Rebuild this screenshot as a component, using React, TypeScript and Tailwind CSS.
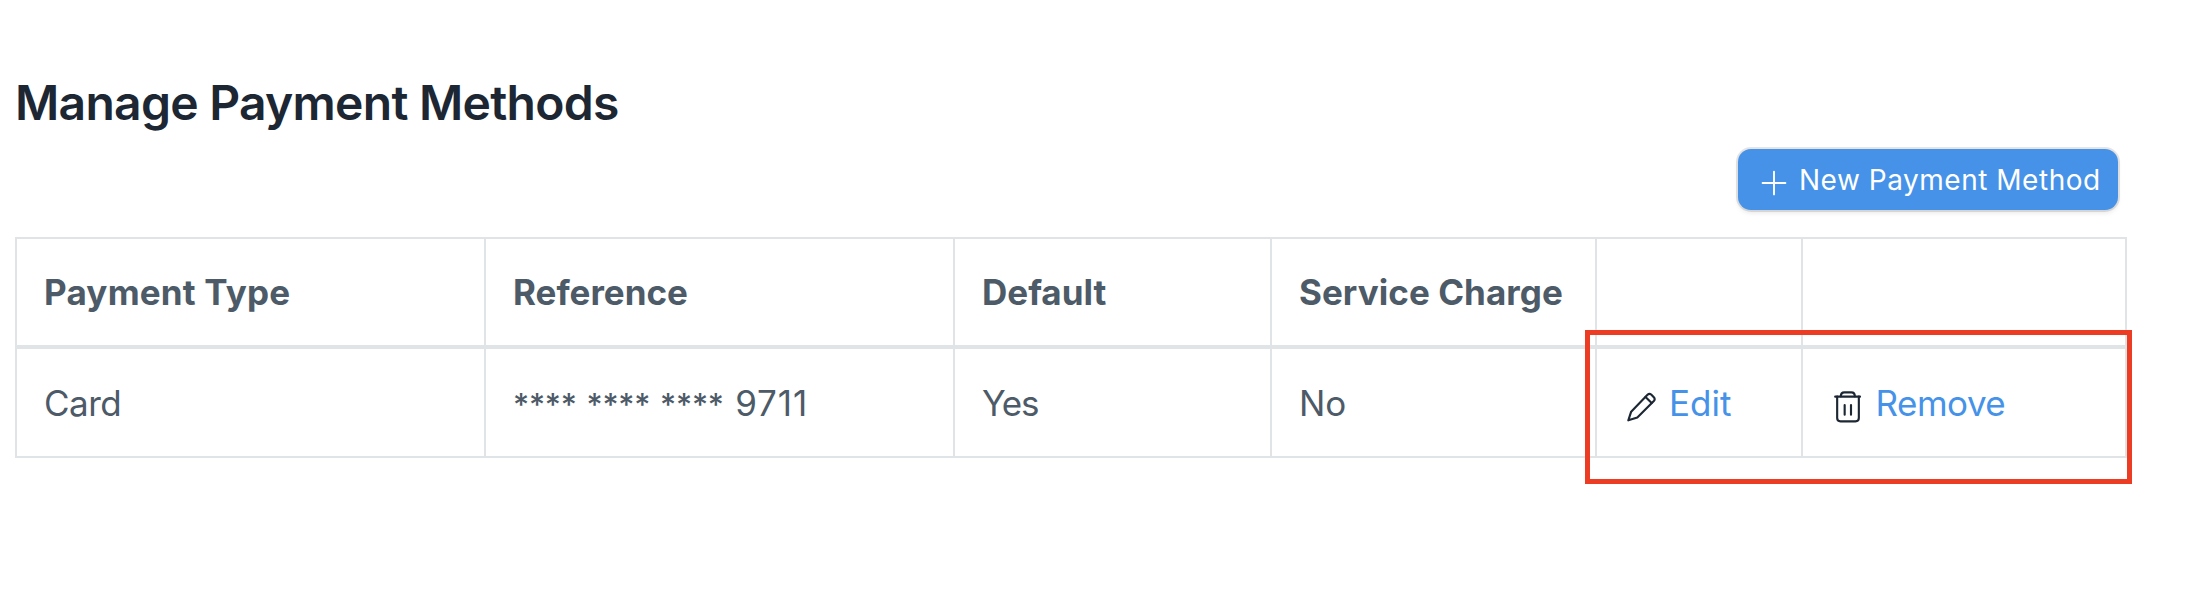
import React from "react";

function PlusIcon() {
  return (
    <svg className="mt-[7px] h-[26px] w-[26px] shrink-0" viewBox="0 0 26 26" fill="none" stroke="currentColor" strokeWidth="1.9" strokeLinecap="round">
      <path d="M13 1.6v22.8M1.6 13h22.8" />
    </svg>
  );
}

function PencilIcon() {
  return (
    <svg className="mt-[7px] h-[30px] w-[30px] shrink-0" viewBox="36 36 90 90" fill="none" stroke="currentColor" strokeWidth="6.4" strokeLinejoin="round" strokeLinecap="round">
      <path d="M40 121 48.500 95 97.500 44.500Q103 39 108.500 43.500L116.500 52Q121.500 57.500 116.500 63L67 112.500Z" />
      <path d="M91.500 51 110 69" />
    </svg>
  );
}

function TrashIcon() {
  return (
    <svg className="mt-[7px] h-[32px] w-[28px] shrink-0" viewBox="42 33 84 96" fill="none" stroke="currentColor" strokeWidth="6.4" strokeLinejoin="round" strokeLinecap="round">
      <path d="M45.500 50H120" />
      <path d="M62.500 49Q62.500 37 73 37H94Q104.500 37 104.500 49" />
      <path d="M51.500 50V114Q51.500 124 61.500 124H106.500Q116.500 124 116.500 114V50" />
      <path d="M74 75V104M93 75V104" />
    </svg>
  );
}

const th = "h-[112px] border-r-2 border-b-4 border-t-2 border-[#e0e4e7] pl-[27px] text-left align-middle font-bold whitespace-nowrap";
const td = "h-[109px] border-r-2 border-b-2 border-[#e0e4e7] pl-[27px] pt-px text-left align-middle whitespace-nowrap";

export default function App() {
  return (
    <div className="h-[604px] w-[2202px] overflow-hidden bg-white pl-[15px] pt-[73px] font-['Inter',sans-serif] text-[#4d5a67]">
      <h1 className="text-[48px] leading-[60px] font-semibold tracking-[-0.72px] text-[#1c2733]">Manage Payment Methods</h1>
      <div className="mt-[16px] flex w-[2103px] justify-end">
        <button className="flex h-[61px] w-[380px] items-center rounded-[13px] bg-[#4592e8] pl-[23px] text-[28px] leading-[40px] tracking-[0.52px] whitespace-nowrap text-white shadow-[0_0_0_2px_rgba(0,0,0,0.1),0_3px_5px_rgba(0,0,0,0.09)]">
          <PlusIcon />
          <span className="ml-[12px]">New Payment Method</span>
        </button>
      </div>
      <div className="relative mt-[27px] w-[2112px]">
        <table className="w-[2112px] table-fixed border-separate border-spacing-0 text-[35px] leading-[52px]">
          <colgroup>
            <col className="w-[471px]" />
            <col className="w-[469px]" />
            <col className="w-[317px]" />
            <col className="w-[325px]" />
            <col className="w-[206px]" />
            <col className="w-[324px]" />
          </colgroup>
          <thead>
            <tr>
              <th className={th + " border-l-2 tracking-[0.2px]"}>Payment Type</th>
              <th className={th}>Reference</th>
              <th className={th}>Default</th>
              <th className={th + " tracking-[0.05px]"}>Service Charge</th>
              <th className={th} />
              <th className={th} />
            </tr>
          </thead>
          <tbody>
            <tr>
              <td className={td + " border-l-2 tracking-[-0.5px]"}>Card</td>
              <td className={td}>
                <div className="flex items-baseline pt-px">
                  <span className="text-[31px] leading-[52px] font-medium tracking-[-0.25px] [word-spacing:2px]">**** **** ****</span>
                  <span className="ml-[11.5px] tracking-[0.9px]">9711</span>
                </div>
              </td>
              <td className={td + " tracking-[-1.2px]"}>Yes</td>
              <td className={td}>No</td>
              <td className={td}>
                <div className="flex items-center pl-[3px]">
                  <span className="text-[#1c2733]"><PencilIcon /></span>
                  <a className="ml-[12px] text-[#4592e8]">Edit</a>
                </div>
              </td>
              <td className={td}>
                <div className="flex items-center pl-[4px]">
                  <span className="text-[#1c2733]"><TrashIcon /></span>
                  <a className="ml-[13.5px] tracking-[-0.5px] text-[#4592e8]">Remove</a>
                </div>
              </td>
            </tr>
          </tbody>
        </table>
        <div className="absolute top-[93px] left-[1570px] h-[154px] w-[547px] border-5 border-[#ec3d24]" />
      </div>
    </div>
  );
}
